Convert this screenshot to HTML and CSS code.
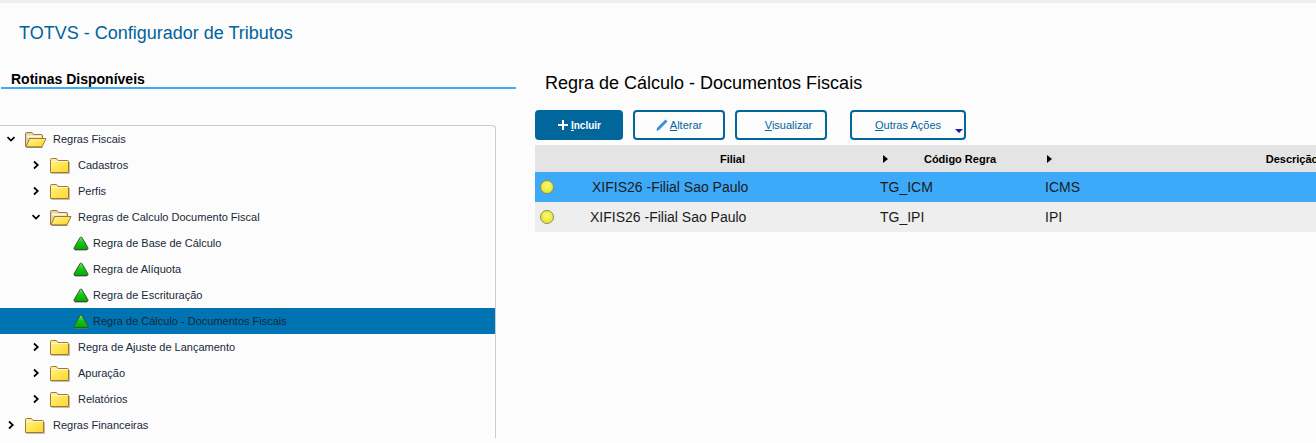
FILE: index.html
```html
<!DOCTYPE html>
<html lang="pt-BR">
<head>
    <meta charset="UTF-8">
    <meta name="viewport" content="width=device-width, initial-scale=1.0">
    <title>TOTVS - Configurador de Tributos</title>
    <link rel="stylesheet" href="styles.css">
</head>
<body>
    <!-- Icon definitions -->
    <svg class="icon-defs" width="0" height="0">
        <defs>
            <linearGradient id="folderFill" x1="0" y1="0" x2="1" y2="1">
                <stop offset="0" stop-color="#fff2a0"/>
                <stop offset="0.5" stop-color="#ffe655"/>
                <stop offset="1" stop-color="#fbd62c"/>
            </linearGradient>
            <linearGradient id="triFill" x1="0" y1="0" x2="0" y2="1">
                <stop offset="0" stop-color="#6cec6c"/>
                <stop offset="0.45" stop-color="#14c814"/>
                <stop offset="1" stop-color="#00ac00"/>
            </linearGradient>
            <symbol id="folder" viewBox="0 0 20 17">
                <path d="M1.5 16.5H19.5V5" fill="none" stroke="#8d7b55" stroke-opacity="0.5"/>
                <path d="M0.5 15.5V2.5Q0.5 1.5 1.5 1.5H6.5L8 3.5H17.5Q18.5 3.5 18.5 4.5V15.5Z" fill="url(#folderFill)" stroke="#9c7a3c"/>
                <path d="M1.5 4.5H17.5" stroke="#fff7c8"/>
            </symbol>
            <symbol id="folder-open" viewBox="0 0 22 17">
                <path d="M0.5 15.5V2.5Q0.5 1.5 1.5 1.5H7L8.5 3.5H16.5Q17.5 3.5 17.5 4.5V8H5L1.5 15.5Z" fill="#e6d3a2" stroke="#9c7a3c"/>
                <path d="M2 6.5V4.5H16V6.5Z" fill="#fff8e0"/>
                <path d="M1 15.8L4.6 7.5H21L17 15.8Z" fill="url(#folderFill)" stroke="#9c7a3c"/>
                <path d="M1.5 16.5H17.5" stroke="#8d6f3a" stroke-opacity="0.8"/>
            </symbol>
            <symbol id="triangle" viewBox="0 0 16 15">
                <path d="M8 1Q8.6 1 9 1.7L14.9 11.8Q15.5 13.2 14 13.5H2Q0.5 13.2 1.1 11.8L7 1.7Q7.4 1 8 1Z" fill="url(#triFill)" stroke="#3d5030"/>
                <path d="M2 14.5H14" stroke="#7a7a6a" stroke-opacity="0.5"/>
            </symbol>
            <symbol id="chevron-right" viewBox="0 0 10 10">
                <path d="M3 1.5L6.8 5L3 8.5" fill="none" stroke="#000" stroke-width="1.7"/>
            </symbol>
            <symbol id="chevron-down" viewBox="0 0 10 10">
                <path d="M1.5 3.2L5 6.6L8.5 3.2" fill="none" stroke="#000" stroke-width="1.7"/>
            </symbol>
        </defs>
    </svg>

    <header class="page-header">
        <h1>TOTVS - Configurador de Tributos</h1>
    </header>

    <main class="layout">
        <!-- Routines tree -->
        <section class="routines">
            <h2>Rotinas Disponíveis</h2>
            <ul class="tree">
                <li class="tree-row level-0">
                    <svg class="chevron"><use href="#chevron-down"/></svg>
                    <svg class="folder-open"><use href="#folder-open"/></svg>
                    <span>Regras Fiscais</span>
                </li>
                <li class="tree-row level-1">
                    <svg class="chevron"><use href="#chevron-right"/></svg>
                    <svg class="folder"><use href="#folder"/></svg>
                    <span>Cadastros</span>
                </li>
                <li class="tree-row level-1">
                    <svg class="chevron"><use href="#chevron-right"/></svg>
                    <svg class="folder"><use href="#folder"/></svg>
                    <span>Perfis</span>
                </li>
                <li class="tree-row level-1">
                    <svg class="chevron"><use href="#chevron-down"/></svg>
                    <svg class="folder-open"><use href="#folder-open"/></svg>
                    <span>Regras de Calculo Documento Fiscal</span>
                </li>
                <li class="tree-row level-2">
                    <svg class="triangle"><use href="#triangle"/></svg>
                    <span>Regra de Base de Cálculo</span>
                </li>
                <li class="tree-row level-2">
                    <svg class="triangle"><use href="#triangle"/></svg>
                    <span>Regra de Alíquota</span>
                </li>
                <li class="tree-row level-2">
                    <svg class="triangle"><use href="#triangle"/></svg>
                    <span>Regra de Escrituração</span>
                </li>
                <li class="tree-row level-2 selected">
                    <svg class="triangle"><use href="#triangle"/></svg>
                    <span>Regra de Cálculo - Documentos Fiscais</span>
                </li>
                <li class="tree-row level-1">
                    <svg class="chevron"><use href="#chevron-right"/></svg>
                    <svg class="folder"><use href="#folder"/></svg>
                    <span>Regra de Ajuste de Lançamento</span>
                </li>
                <li class="tree-row level-1">
                    <svg class="chevron"><use href="#chevron-right"/></svg>
                    <svg class="folder"><use href="#folder"/></svg>
                    <span>Apuração</span>
                </li>
                <li class="tree-row level-1">
                    <svg class="chevron"><use href="#chevron-right"/></svg>
                    <svg class="folder"><use href="#folder"/></svg>
                    <span>Relatórios</span>
                </li>
                <li class="tree-row level-0">
                    <svg class="chevron"><use href="#chevron-right"/></svg>
                    <svg class="folder"><use href="#folder"/></svg>
                    <span>Regras Financeiras</span>
                </li>
            </ul>
        </section>

        <!-- Rules browse -->
        <section class="rules">
            <h2>Regra de Cálculo - Documentos Fiscais</h2>
            <div class="toolbar">
                <button class="btn btn-primary btn-incluir">
                    <svg class="btn-icon" viewBox="0 0 12 12"><path d="M6 1V11M1 6H11" stroke="#fff" stroke-width="2"/></svg>
                    <span><u>I</u>ncluir</span>
                </button>
                <button class="btn btn-alterar">
                    <svg class="btn-icon" viewBox="0 0 12 12"><path d="M0.5 12L1 9L9.5 0.5L11.5 2.5L3 11Z" fill="#3a90d8"/></svg>
                    <span><u>A</u>lterar</span>
                </button>
                <button class="btn btn-visualizar"><span><u>V</u>isualizar</span></button>
                <button class="btn btn-outras">
                    <span><u>O</u>utras Ações</span>
                    <i class="caret"></i>
                </button>
            </div>
            <div class="browse">
                <table>
                    <colgroup>
                        <col class="col-status">
                        <col class="col-filial">
                        <col class="col-codigo">
                        <col class="col-descricao">
                    </colgroup>
                    <thead>
                        <tr>
                            <th></th>
                            <th>Filial</th>
                            <th class="sortable">Código Regra</th>
                            <th class="sortable sortable-wide">Descrição</th>
                        </tr>
                    </thead>
                    <tbody>
                        <tr class="row-active">
                            <td><i class="status-dot"></i></td>
                            <td class="cell-filial">XIFIS26 -Filial Sao Paulo</td>
                            <td class="cell-codigo">TG_ICM</td>
                            <td>ICMS</td>
                        </tr>
                        <tr>
                            <td><i class="status-dot"></i></td>
                            <td class="cell-filial">XIFIS26 -Filial Sao Paulo</td>
                            <td class="cell-codigo">TG_IPI</td>
                            <td>IPI</td>
                        </tr>
                    </tbody>
                </table>
            </div>
        </section>
    </main>
</body>
</html>
```

FILE: styles.css
```css
/* Page */
body {
    margin: 0;
    height: 443px;
    overflow: hidden;
    background: #fcfcfc;
    border-top: 3px solid #eeeeee;
    box-sizing: border-box;
    font-family: "Liberation Sans", Arial, sans-serif;
    color: #000;
}

.icon-defs {
    position: absolute;
}

/* Header */
.page-header {
    height: 59px;
    box-sizing: border-box;
    padding: 19px 0 0 19px;
}

.page-header h1 {
    margin: 0;
    font-size: 18px;
    line-height: 22px;
    font-weight: normal;
    color: #00639b;
}

.layout {
    display: grid;
    grid-template-columns: 516px 1fr;
}

/* Routines tree */
.routines h2 {
    margin: 9px 0 0 1px;
    padding-left: 10px;
    height: 16px;
    font-size: 14px;
    line-height: 16px;
    font-weight: bold;
    border-bottom: 2px solid #3daaf5;
}

.tree {
    list-style: none;
    margin: 36px 20px 0 0;
    padding: 0;
    border-top: 1px solid #cccccc;
    border-right: 1px solid #cccccc;
    border-top-right-radius: 4px;
}

.tree-row {
    display: flex;
    align-items: center;
    height: 26px;
    font-size: 11px;
    color: #1a2838;
}

.tree-row.selected {
    background: #0073b3;
}

.level-0 {
    padding-left: 6px;
}

.level-1 {
    padding-left: 31px;
}

.level-2 {
    padding-left: 73px;
}

.chevron {
    width: 10px;
    height: 10px;
    margin-right: 9px;
}

.folder-open {
    width: 22px;
    height: 17px;
    margin-right: 6px;
}

.folder {
    width: 20px;
    height: 17px;
    margin-right: 8px;
}

.triangle {
    width: 16px;
    height: 15px;
    margin-right: 4px;
}

/* Rules browse */
.rules {
    padding-left: 19px;
    min-width: 0;
}

.rules h2 {
    margin: 10px 0 0 10px;
    font-size: 18px;
    line-height: 22px;
    font-weight: normal;
}

.toolbar {
    display: flex;
    margin-top: 16px;
}

.btn {
    position: relative;
    display: flex;
    align-items: center;
    justify-content: center;
    gap: 2px;
    height: 30px;
    padding: 0;
    border: 2px solid #00669c;
    border-radius: 4px;
    background: #fcfcfc;
    color: #00669c;
    font-family: inherit;
    font-size: 11px;
}

.btn-primary {
    background: #00669c;
    color: #fff;
    font-size: 10px;
    font-weight: bold;
}

.btn-icon {
    width: 12px;
    height: 12px;
}

.btn-incluir {
    width: 88px;
    margin-right: 10px;
}

.btn-alterar {
    width: 92px;
    margin-right: 10px;
}

.btn-visualizar {
    width: 92px;
    padding-left: 15px;
    margin-right: 23px;
}

.btn-outras {
    width: 116px;
}

.caret {
    position: absolute;
    right: 1px;
    bottom: 5px;
    border-left: 4px solid transparent;
    border-right: 4px solid transparent;
    border-top: 4px solid #1a1aa6;
}

/* Table */
.browse {
    margin-top: 5px;
    overflow: hidden;
}

table {
    width: 1009px;
    table-layout: fixed;
    border-collapse: collapse;
}

.col-status {
    width: 50px;
}

.col-filial {
    width: 295px;
}

.col-codigo {
    width: 160px;
}

th {
    height: 27px;
    padding: 0;
    background: #e4e4e4;
    font-size: 11px;
    text-align: center;
}

th.sortable {
    position: relative;
}

th.sortable::before {
    content: "";
    position: absolute;
    left: 3px;
    top: 10px;
    border-top: 4px solid transparent;
    border-bottom: 4px solid transparent;
    border-left: 5px solid #000;
}

th.sortable-wide::before {
    left: 7px;
}

td {
    height: 30px;
    padding: 0 0 0 5px;
    background: #eeeeee;
    font-size: 14px;
    color: #1b1b1b;
}

td.cell-codigo {
    padding-left: 0;
}

.row-active td {
    background: #3daaf9;
}

.row-active .cell-filial {
    padding-left: 7px;
}

.status-dot {
    display: block;
    box-sizing: border-box;
    width: 14px;
    height: 14px;
    border: 1px solid #8a8a6a;
    border-radius: 50%;
    background: radial-gradient(circle at 50% 40%, #fbfb78, #e6e628 75%);
}
```
